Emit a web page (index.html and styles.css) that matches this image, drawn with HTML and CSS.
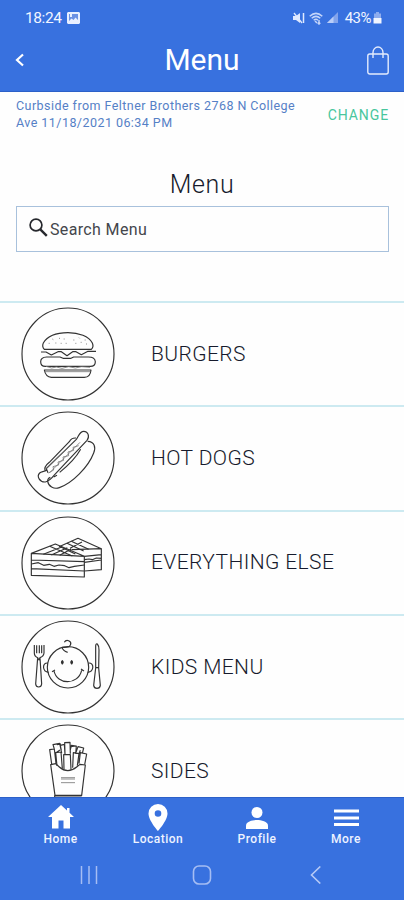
FILE: index.html
```html
<!DOCTYPE html>
<html lang="en">
<head>
    <meta charset="UTF-8">
    <meta name="viewport" content="width=device-width, initial-scale=1.0">
    <title>Menu</title>
    <link rel="stylesheet" href="styles.css">
</head>
<body>
    <header>
        <div class="status-bar">
            <span class="time">18:24</span>
            <svg class="picture" width="13" height="12" viewBox="0 0 13 12">
                <path d="M1 0h11l1 1v10l-1 1H1l-1-1V1z" fill="#e8efff"/>
                <path d="M2 2h9v6L8.500 5.500 6.500 8 4.500 6.500 2 9z" fill="#6b91e4"/>
                <path d="M3 2h2v3H3z" fill="#e8efff"/>
            </svg>
            <div class="signals">
                <svg width="12" height="12" viewBox="0 0 12 12">
                    <path d="M0 4h3l4-3v10L3 8H0z" fill="#dfe9ff"/>
                    <path d="M1 1l8 10" stroke="#dfe9ff" stroke-width="1.300"/>
                    <path d="M10.500 1v10" stroke="#dfe9ff" stroke-width="1.500"/>
                </svg>
                <svg width="14" height="13" viewBox="0 0 14 13" fill="none" stroke="#c4d5fa" stroke-width="1.500">
                    <path d="M.7 4.200Q7-1.500 13.300 4.200M2.700 6.300Q7 2.400 11.300 6.300M4.700 8.300Q7 6.300 9 8.300"/>
                    <path d="M6 9l2 2M10 8v4M8.700 10.700L10 12l1.300-1.300"/>
                </svg>
                <svg width="12" height="12" viewBox="0 0 12 12">
                    <path d="M11 0v11H0z" fill="#83a4ec"/>
                    <path d="M6.500 4.500V11H0z" fill="#b9cdf8"/>
                </svg>
                <span class="battery">43%</span>
                <svg width="9" height="12" viewBox="0 0 9 12">
                    <path d="M3 0h3v1.500h2V6H1V1.500h2z" fill="#8eacee"/>
                    <path d="M.5 6h8v5.500h-8z" fill="#f1f5ff"/>
                </svg>
            </div>
        </div>
        <div class="title-bar">
            <svg class="back" width="10" height="14" viewBox="0 0 10 14"><path d="M8 1.500L2 7l6 5.500" fill="none" stroke="#fff" stroke-width="2.200"/></svg>
            <h1>Menu</h1>
            <svg class="bag" width="22" height="29" viewBox="0 0 22 29" fill="none" stroke="#e3ebfd" stroke-width="1.400">
                <rect x=".8" y="8" width="20.400" height="20" rx="2"/>
                <path d="M6 12V6.500a5 5.500 0 0 1 10 0V12"/>
            </svg>
        </div>
    </header>

    <div class="order-info">
        <p>Curbside from Feltner Brothers 2768 N College<br>Ave 11/18/2021 06:34 PM</p>
        <a class="change">CHANGE</a>
    </div>

    <main>
        <h2>Menu</h2>
        <div class="search">
            <svg width="19" height="19" viewBox="0 0 19 19" fill="none" stroke="#26282d">
                <circle cx="7" cy="7" r="5.900" stroke-width="1.700"/>
                <path d="M11.300 11.300l6.500 6.500" stroke-width="2.400"/>
            </svg>
            <span>Search Menu</span>
        </div>

        <ul class="categories">
            <li>
                <svg class="icon" viewBox="33 19 282 282">
                    <circle cx="174" cy="160" r="138"/>
                    <path d="M103 146Q95 138 100 127C112 106 142 96 174 96s63 11 73 31q5 12-3 19z"/>
                    <path class="thin" d="M116 128h3M127 115l3 2M136 127h3M147 112l3 2M152 128h3M161 115h3M167 128h3M190 118h3M196 128h3M207 111l2 2M212 125h3M224 118h3M228 130h3"/>
                    <path d="M93 154h15l16 9 20-10h10l17 12 17-12h10l16 9 20-10h24"/>
                    <path d="M110 169h40l9 4h24l8-4h44q20 0 21 14 0 14-15 14H106q-14 0-14-14 0-13 18-14z"/>
                    <path class="thin" d="M108 197l17 5 14-3 17 4 20-5 20 4 19-4 25 2"/>
                    <path d="M103 208h140q-2 22-20 22H124q-17-1-21-22z"/>
                    <path class="thin" d="M105 213h136"/>
                </svg>
                <span>BURGERS</span>
            </li>
            <li>
                <svg class="icon" viewBox="33 19 282 282">
                    <circle cx="174" cy="160" r="138"/>
                    <path d="M106 200c-6-12 3-20 12-27l60-62q6-12 20-11"/>
                    <path d="M114 204l-5-12 90-88c7-10 10-24 22-24 15 0 18 18 10 27l-97 103q-16 20-28 22c-17 1-27-17-17-27 5-5 12-3 20-8"/>
                    <path class="thin" d="M105 194l85-82M115 205l16-9-2-10 17-5-2-9 17-5-2-10 17-4-2-11 17-5-2-9 17-5M118 205l92-92"/>
                    <path d="M233 110c21 1 25 18 18 35-16 42-64 91-103 104-17 6-33-5-35-19q-1-8 8-12M131 217l10-5M149 203c19-15 45-37 63-69"/>
                </svg>
                <span>HOT DOGS</span>
            </li>
            <li>
                <svg class="icon" viewBox="33 19 282 282">
                    <circle cx="174" cy="160" r="138"/>
                    <path d="M64 131l72-28 87 37v62l-159-5zM64 131l159 9M64 151l159 5M64 177l159 7"/>
                    <path d="M64 163l21-4 16 8 17-3 14 6 15-4 17 2 13 6 16-4 30-4"/>
                    <path d="M147 111l57-25 70 31v63l-51 4M185 120l89-3M223 140l51-5M223 158l51-7M223 150l14-2 10 2 12-5 15 1"/>
                    <path d="M100 134l57-23M124 136l48-22M149 137l35-19M119 110l68 29M151 111l45 22M171 101l50 23M184 95l52 24M180 116l36-19"/>
                </svg>
                <span>EVERYTHING ELSE</span>
            </li>
            <li>
                <svg class="icon" viewBox="33 19 282 282">
                    <circle cx="174" cy="160" r="138"/>
                    <circle cx="174" cy="161" r="62"/>
                    <path d="M113 148c-17-1-17 26 3 28M236 148c17-1 17 26-3 28"/>
                    <path d="M163 86c6-11 22-4 19 6-2 8-15 10-26 9q3 11 17 15M126 174l9-5M213 166l9 6M132 172c9 42 72 44 83-2"/>
                    <path class="solid" d="M157 141q5 5 0 10-5-5 0-10zM185 141q5 5 0 10-5-5 0-10z"/>
                    <path d="M73 94v24q0 10 10 14l-6 79q1 9 9 9t9-9l-5-79q11-4 12-14V94M80 95v24M88 95v24M95 95v24M83 132l4 7 3-7"/>
                    <path d="M257 98q0-9 5-7 5 5 5 18l-1 54 5 52q-1 9-10 9t-10-9l6-52zM258 162h8"/>
                </svg>
                <span>KIDS MENU</span>
            </li>
            <li>
                <svg class="icon" viewBox="33 29 282 282">
                    <circle cx="174" cy="170" r="138"/>
                    <path d="M122 151l15-3 11 10q25 22 52 0l10-8 16 2-11 91h-80zM134 243v5h81"/>
                    <path d="M125 149l-6-43 14-2 5 43M141 155l-4-40 16-2 4 50M133 104l-4-13 20-4 6 29M154 109l-3-16 12-3 2 30M165 118l-1-33 16-1 1 34M162 165l-1-44h20l2 45M181 107l3-14 15 2-2 24M188 160l2-45 17 3-5 36M198 114l6-17 17 4-4 16M207 148l4-33 19 4-6 32M137 116l13-9M141 91l12-2M183 97l14-2M207 118l4-10"/>
                    <path class="thin" d="M153 190h42M153 194h42M153 205h42"/>
                </svg>
                <span>SIDES</span>
            </li>
        </ul>
    </main>

    <footer>
        <nav class="tabs">
            <a class="home">
                <svg width="26" height="24" viewBox="0 0 26 24"><path d="M13 0L0 12h4v11.500h6.500v-8h5v8H22V12h4L21.500 7.800V3H19v2.500z" fill="#fff"/></svg>
                Home
            </a>
            <a class="location">
                <svg width="20" height="27" viewBox="0 0 20 27"><path fill-rule="evenodd" d="M10 0a9.500 9.500 0 0 0-9.500 9.500C.5 16.500 10 27 10 27s9.500-10.500 9.500-17.500A9.500 9.500 0 0 0 10 0zm0 6.200a3.300 3.300 0 1 1 0 6.600 3.300 3.300 0 0 1 0-6.600z" fill="#fff"/></svg>
                Location
            </a>
            <a class="profile">
                <svg width="22" height="22" viewBox="0 0 22 22"><circle cx="11" cy="5.500" r="5.500" fill="#fff"/><path d="M0 22v-3.500C0 14.500 7 13 11 13s11 1.500 11 5.500V22z" fill="#fff"/></svg>
                Profile
            </a>
            <a class="more">
                <svg width="25" height="22" viewBox="0 0 25 22"><path d="M0 2.500h25v3H0zM0 9.500h25v3H0zM0 16h25v3H0z" fill="#fff"/></svg>
                More
            </a>
        </nav>
        <div class="system-nav">
            <svg width="18" height="18" viewBox="0 0 18 18"><path d="M1.500 0v18M9 0v18M16.500 0v18" stroke="#a5bdf3" stroke-width="1.500"/></svg>
            <svg class="circle" width="20" height="20" viewBox="0 0 20 20"><rect x="1.500" y="1" width="17" height="18" rx="5.500" fill="none" stroke="#a5bdf3" stroke-width="1.600"/></svg>
            <svg width="11" height="18" viewBox="0 0 11 18"><path d="M10.300.5L1.500 9l8.800 8.500" fill="none" stroke="#b5c9f6" stroke-width="1.600"/></svg>
        </div>
    </footer>
</body>
</html>
```

FILE: styles.css
```css
* { box-sizing: border-box; }
body { margin: 0; height: 900px; display: flex; flex-direction: column; overflow: hidden; background: #fefefe; font-family: Roboto, sans-serif; color: #161a2c; }
h1, h2, p, ul { margin: 0; padding: 0; font-weight: 400; }
svg { display: block; flex: none; }

header { flex: none; height: 92px; background: #3871df; color: #fff; border-bottom: 1px solid #2c60c8; }
.status-bar { display: flex; align-items: center; height: 36px; padding: 0 22px 0 25px; color: #f1f5ff; font-size: 15px; }
.time { width: 36px; font-size: 15.500px; letter-spacing: -0.400px; }
.picture { margin-left: 6px; }
.signals { display: flex; align-items: center; gap: 4px; margin-left: auto; }
.battery { margin-left: 2px; margin-right: -2px; letter-spacing: -0.500px; }
.title-bar { display: flex; align-items: center; justify-content: space-between; height: 48px; padding: 0 15px; }
.back { margin-right: 12px; }
h1 { margin-top: -2px; font-size: 30px; letter-spacing: 0; }

.order-info { flex: none; display: flex; justify-content: space-between; height: 70px; padding: 5px 15px 0 16px; color: #5580c6; font-size: 12.500px; line-height: 17px; letter-spacing: 0.450px; white-space: nowrap; }
.change { padding-top: 10px; color: #48c69d; font-size: 14px; letter-spacing: 0.900px; }

main { flex: 1; min-height: 0; overflow: hidden; }
h2 { padding-top: 8px; height: 44px; text-align: center; font-size: 25px; font-weight: 300; line-height: 30px; letter-spacing: 0.600px; }
.search { display: flex; align-items: center; gap: 2px; height: 46px; margin: 0 15px 49px 16px; padding-left: 12px; border: 1px solid #a8c1dc; color: #44464c; font-size: 16px; letter-spacing: 0.350px; }
.search svg { margin-top: -4px; }
.categories { list-style: none; }
.categories li { display: flex; align-items: center; height: 104.300px; padding-left: 21px; border-top: 2px solid #cdeaf1; font-size: 21px; font-weight: 300; letter-spacing: 0.400px; }
.categories span { margin-top: -1px; }
.icon { width: 94px; height: 94px; margin-right: 36px; fill: none; stroke: #333; stroke-width: 3.500; stroke-linejoin: round; }
.icon .thin { stroke: #777; stroke-width: 2.500; }
.icon .solid { fill: #333; }

footer { flex: none; height: 103px; background: #3871df; border-top: 1px solid #2c60c8; color: #eef3ff; }
.tabs { display: flex; height: 49px; padding-left: 12px; font-size: 12px; font-weight: 500; letter-spacing: 0.500px; }
.tabs a { display: flex; flex-direction: column; align-items: center; justify-content: flex-end; gap: 2px; width: 97px; line-height: 16px; }
.tabs .location { width: 98px; gap: 0; }
.tabs .profile { width: 100px; }
.tabs .more { width: 78px; }
.system-nav { display: flex; align-items: center; justify-content: space-between; height: 56px; padding: 0 83px 0 80px; }
.circle { margin-right: 4px; }
```
